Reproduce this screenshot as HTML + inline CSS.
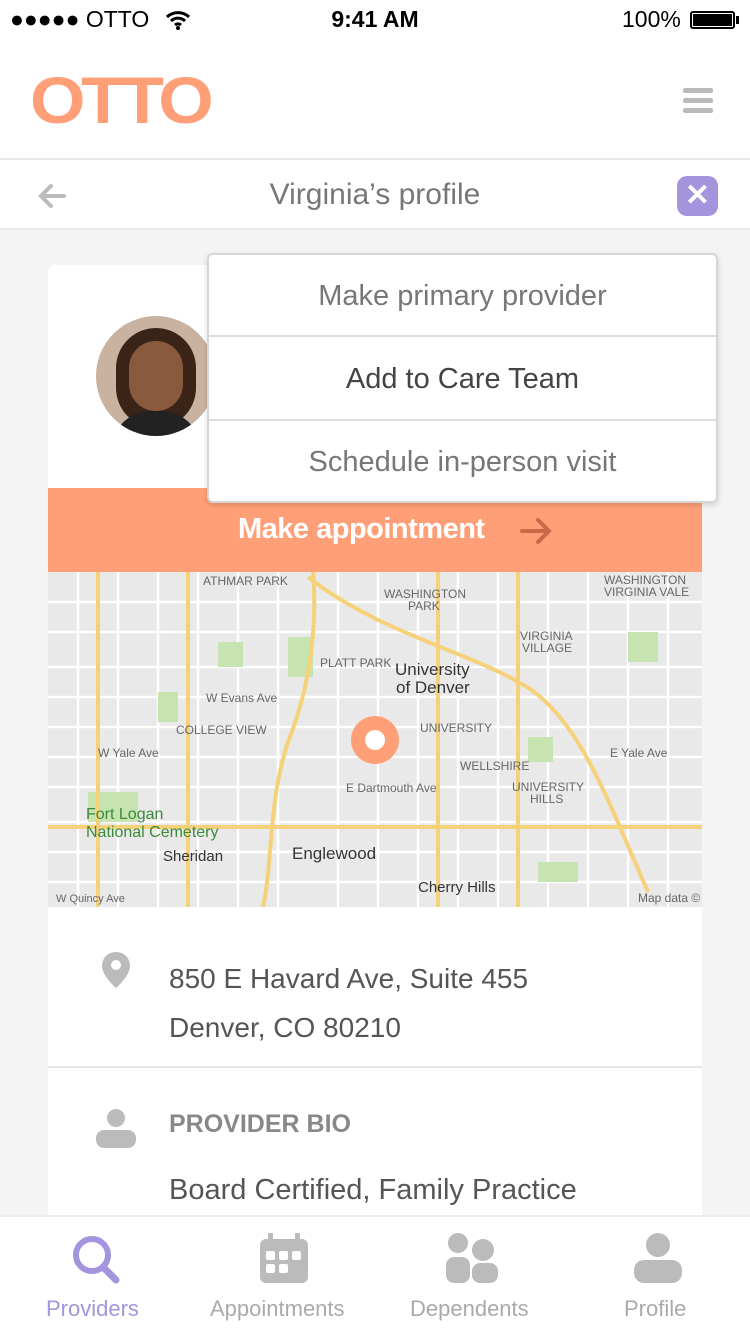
<!DOCTYPE html>
<html><head><meta charset="utf-8"><style>
*{margin:0;padding:0;box-sizing:border-box}
body{width:750px;height:1334px;overflow:hidden;background:#f4f4f4;font-family:"Liberation Sans",sans-serif;position:relative}
.abs{position:absolute}
</style></head><body>
<div class="abs" style="left:0;top:0;width:750px;height:158px;background:#fff"></div>
<div class="abs" style="left:10px;top:6px;font-size:23px;color:#000">●●●●● OTTO</div>
<svg class="abs" style="left:165px;top:10px" width="26" height="20" viewBox="0 0 26 20"><path d="M2 7a16 16 0 0 1 22 0M6 11a10 10 0 0 1 14 0M10 15a4.5 4.5 0 0 1 6 0" stroke="#000" stroke-width="3" fill="none"/><circle cx="13" cy="18" r="2" fill="#000"/></svg>
<div class="abs" style="left:0;width:750px;top:6px;text-align:center;font-size:23px;font-weight:bold;color:#000">9:41 AM</div>
<div class="abs" style="left:622px;top:6px;font-size:23px">100%</div>
<div class="abs" style="left:690px;top:11px;width:45px;height:18px;border:2px solid #000;border-radius:3px;padding:1px"><div style="background:#000;width:100%;height:100%"></div></div>
<div class="abs" style="left:736px;top:16px;width:3px;height:8px;background:#000"></div>
<div class="abs" style="left:30px;top:64px;font-size:66px;font-weight:bold;color:#FF9F78;letter-spacing:-4px;line-height:72px;transform:scaleX(1.08);transform-origin:left">OTTO</div>
<div class="abs" style="left:683px;top:88px;width:30px;height:5px;background:#bbb;border-radius:2px"></div>
<div class="abs" style="left:683px;top:98px;width:30px;height:5px;background:#bbb;border-radius:2px"></div>
<div class="abs" style="left:683px;top:108px;width:30px;height:5px;background:#bbb;border-radius:2px"></div>
<div class="abs" style="left:0;top:158px;width:750px;height:2px;background:#e8e8e8"></div>
<div class="abs" style="left:0;top:160px;width:750px;height:70px;background:#fff;border-bottom:2px solid #e8e8e8"></div>
<svg class="abs" style="left:36px;top:180px" width="32" height="32" viewBox="0 0 32 32"><path d="M28 16H6M15 6L5 16l10 10" stroke="#bbb" stroke-width="4" fill="none" stroke-linecap="round"/></svg>
<div class="abs" style="left:0;width:750px;top:178px;text-align:center;font-size:30px;color:#777">Virginia’s profile</div>
<div class="abs" style="left:677px;top:176px;width:41px;height:40px;background:#a394dd;border-radius:10px;color:#fff;font-size:30px;font-weight:bold;text-align:center;line-height:40px">✕</div>
<div class="abs" style="left:48px;top:265px;width:654px;height:960px;background:#fff;border-radius:8px"></div>
<div class="abs" style="left:96px;top:316px;width:120px;height:120px;border-radius:50%;background:#c9b3a0;overflow:hidden"><div style="position:absolute;left:20px;top:12px;width:80px;height:100px;border-radius:40px;background:#3a2418"></div><div style="position:absolute;left:33px;top:25px;width:54px;height:70px;border-radius:27px;background:#8a5a3c"></div><div style="position:absolute;left:15px;top:95px;width:90px;height:40px;border-radius:40px 40px 0 0;background:#222"></div></div>
<div class="abs" style="left:48px;top:488px;width:654px;height:84px;background:#FF9F78"></div>
<div class="abs" style="left:238px;top:513px;font-size:29px;color:#fff;font-weight:bold;letter-spacing:-0.5px">Make appointment</div>
<svg class="abs" style="left:518px;top:514px" width="36" height="34" viewBox="0 0 36 34"><path d="M4 17h26M20 6l11 11-11 11" stroke="#c9694a" stroke-width="4" fill="none" stroke-linecap="round"/></svg>
<svg class="abs" style="left:48px;top:572px" width="654" height="335" viewBox="0 0 654 335">
<rect width="654" height="335" fill="#e9e9e9"/>
<g stroke="#fff" stroke-width="2.5">
<path d="M0 30H654M0 60H654M0 95H654M0 125H654M0 155H654M0 185H654M0 215H654M0 250H654M0 280H654M0 310H654"/>
<path d="M30 0V335M70 0V335M110 0V335M150 0V335M190 0V335M230 0V335M290 0V335M330 0V335M370 0V335M410 0V335M450 0V335M500 0V335M540 0V335M580 0V335M620 0V335"/>
</g>
<g fill="#c7e4b0"><rect x="240" y="65" width="25" height="40"/><rect x="170" y="70" width="25" height="25"/><rect x="580" y="60" width="30" height="30"/><rect x="110" y="120" width="20" height="30"/><rect x="480" y="165" width="25" height="25"/><rect x="40" y="220" width="50" height="30"/><rect x="490" y="290" width="40" height="20"/></g>
<g stroke="#f5d27a" stroke-width="4" fill="none"><path d="M0 255H654"/><path d="M265 0C270 60 260 120 240 170 220 230 225 290 215 335"/><path d="M260 5C330 60 420 80 470 110 530 140 560 230 600 320"/><path d="M50 0V335M140 0V335M470 0V335M390 0V335"/></g>
<g font-family="Liberation Sans" font-size="12" fill="#666"><text x="155" y="13">ATHMAR PARK</text><text x="336" y="26">WASHINGTON</text><text x="360" y="38">PARK</text><text x="272" y="95">PLATT PARK</text><text x="128" y="162">COLLEGE VIEW</text><text x="412" y="198">WELLSHIRE</text><text x="556" y="12">WASHINGTON</text><text x="556" y="24">VIRGINIA VALE</text><text x="472" y="68">VIRGINIA</text><text x="474" y="80">VILLAGE</text><text x="464" y="219">UNIVERSITY</text><text x="482" y="231">HILLS</text><text x="372" y="160">UNIVERSITY</text><text x="158" y="130">W Evans Ave</text><text x="50" y="185">W Yale Ave</text><text x="298" y="220">E Dartmouth Ave</text><text x="562" y="185">E Yale Ave</text><text x="590" y="330">Map data ©</text><text x="8" y="330" font-size="11">W Quincy Ave</text></g>
<g font-family="Liberation Sans" fill="#333"><text x="347" y="103" font-size="17">University</text><text x="348" y="121" font-size="17">of Denver</text><text x="244" y="287" font-size="17">Englewood</text><text x="115" y="289" font-size="15">Sheridan</text><text x="370" y="320" font-size="15">Cherry Hills</text><text x="38" y="247" font-size="16" fill="#3a8a3a">Fort Logan</text><text x="38" y="265" font-size="16" fill="#3a8a3a">National Cemetery</text></g>
<circle cx="327" cy="168" r="24" fill="#FF9F78"/><circle cx="327" cy="168" r="10" fill="#fff"/>
</svg>
<div class="abs" style="left:48px;top:1066px;width:654px;height:2px;background:#e6e6e6"></div>
<svg class="abs" style="left:100px;top:950px" width="32" height="40" viewBox="0 0 32 40"><path d="M16 2C8 2 2 8 2 16c0 10 14 22 14 22s14-12 14-22C30 8 24 2 16 2z" fill="#bbb"/><circle cx="16" cy="15" r="5" fill="#fff"/></svg>
<div class="abs" style="left:169px;top:954px;font-size:28px;color:#555;line-height:49px">850 E Havard Ave, Suite 455<br>Denver, CO 80210</div>
<svg class="abs" style="left:96px;top:1108px" width="40" height="40" viewBox="0 0 40 40"><circle cx="20" cy="10" r="9" fill="#bbb"/><rect x="0" y="22" width="40" height="18" rx="8" fill="#bbb"/></svg>
<div class="abs" style="left:169px;top:1110px;font-size:25px;font-weight:bold;color:#888">PROVIDER BIO</div>
<div class="abs" style="left:169px;top:1174px;font-size:29px;color:#555">Board Certified, Family Practice</div>
<div class="abs" style="left:207px;top:253px;width:511px;height:250px;background:#fff;border:2px solid #d6d6d6;border-radius:6px;box-shadow:0 2px 6px rgba(0,0,0,.15)">
<div style="height:82px;border-bottom:2px solid #ddd;text-align:center;line-height:82px;font-size:29px;color:#777">Make primary provider</div>
<div style="height:84px;border-bottom:2px solid #ddd;text-align:center;line-height:84px;font-size:29px;color:#444">Add to Care Team</div>
<div style="height:82px;text-align:center;line-height:82px;font-size:29px;color:#777">Schedule in-person visit</div>
</div>
<div class="abs" style="left:0;top:1215px;width:750px;height:119px;background:#fff;border-top:2px solid #eee"></div>
<svg class="abs" style="left:70px;top:1233px" width="52" height="52" viewBox="0 0 52 52"><circle cx="22" cy="22" r="16" stroke="#a394dd" stroke-width="6" fill="none"/><path d="M33 34l13 13" stroke="#a394dd" stroke-width="7" stroke-linecap="round"/></svg>
<svg class="abs" style="left:260px;top:1233px" width="48" height="50" viewBox="0 0 48 50"><rect x="0" y="6" width="48" height="44" rx="6" fill="#bbb"/><rect x="8" y="0" width="5" height="10" fill="#bbb"/><rect x="35" y="0" width="5" height="10" fill="#bbb"/><g fill="#fff"><rect x="6" y="18" width="9" height="9" rx="2"/><rect x="19" y="18" width="9" height="9" rx="2"/><rect x="32" y="18" width="9" height="9" rx="2"/><rect x="6" y="31" width="9" height="9" rx="2"/><rect x="19" y="31" width="9" height="9" rx="2"/></g></svg>
<svg class="abs" style="left:446px;top:1233px" width="52" height="50" viewBox="0 0 52 50"><ellipse cx="12" cy="10" rx="10" ry="10" fill="#bbb"/><ellipse cx="37" cy="17" rx="11" ry="11" fill="#bbb"/><rect x="0" y="24" width="24" height="26" rx="8" fill="#bbb"/><rect x="26" y="30" width="26" height="20" rx="8" fill="#bbb"/></svg>
<svg class="abs" style="left:634px;top:1233px" width="48" height="50" viewBox="0 0 48 50"><circle cx="24" cy="12" r="12" fill="#bbb"/><rect x="0" y="27" width="48" height="23" rx="10" fill="#bbb"/></svg>
<div class="abs" style="left:46px;top:1296px;font-size:22px;color:#a394dd">Providers</div>
<div class="abs" style="left:210px;top:1296px;font-size:22px;color:#aaa">Appointments</div>
<div class="abs" style="left:410px;top:1296px;font-size:22px;color:#aaa">Dependents</div>
<div class="abs" style="left:624px;top:1296px;font-size:22px;color:#aaa">Profile</div>
</body></html>
